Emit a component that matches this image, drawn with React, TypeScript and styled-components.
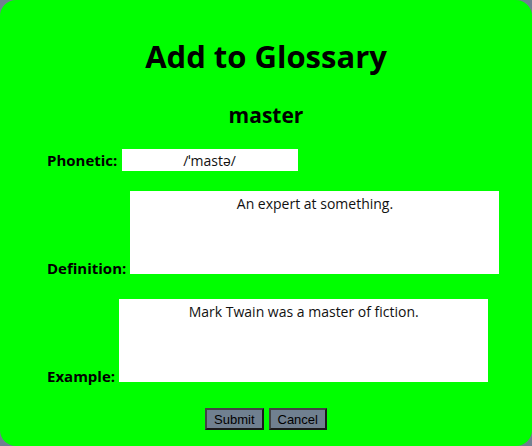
import React from 'react';
import styled, { createGlobalStyle } from 'styled-components';

const GlobalStyle = createGlobalStyle`
  html, body {
    margin: 0;
    padding: 0;
    background: #708090;
    overflow: hidden;
  }
`;

const Card = styled.div`
  box-sizing: border-box;
  width: 532px;
  height: 446px;
  background: #00ff00;
  border-radius: 16px;
  padding: 26px 0 0 47px;
  font-family: 'Open Sans', 'Noto Sans', sans-serif;
  color: #000;
`;

const Title = styled.h1`
  margin: 0 0 0 -47px;
  font-size: 31px;
  font-weight: 700;
  text-align: center;
  line-height: 60px;
`;

const Word = styled.h2`
  margin: 14px 0 0 -47px;
  font-size: 21px;
  font-weight: 700;
  text-align: center;
  line-height: 30px;
`;

const Row = styled.div<{ $top: number }>`
  margin-top: ${p => p.$top}px;
  line-height: 20px;
`;

const Label = styled.label`
  font-size: 15px;
  font-weight: 700;
`;

const TextInput = styled.input`
  box-sizing: border-box;
  width: 176px;
  height: 22px;
  border: none;
  outline: none;
  padding: 0;
  vertical-align: baseline;
  background: #fff;
  text-align: center;
  font-family: 'Open Sans', 'Noto Sans', sans-serif;
  font-size: 14px;
  color: #111;
`;

const TextArea = styled.textarea`
  box-sizing: border-box;
  width: 369px;
  height: 83px;
  border: none;
  outline: none;
  resize: none;
  padding: 3px 2px;
  margin: 0;
  vertical-align: baseline;
  background: #fff;
  text-align: center;
  font-family: 'Open Sans', 'Noto Sans', sans-serif;
  font-size: 14px;
  line-height: 20px;
  color: #111;
`;

const Buttons = styled.div`
  display: flex;
  justify-content: center;
  gap: 5px;
  margin: 22px 0 0 -47px;
`;

const Button = styled.button`
  box-sizing: border-box;
  height: 22px;
  padding: 0 7px;
  background: #708090;
  border: 2px solid #1a1a1a;
  border-top-color: #444;
  border-left-color: #444;
  font-family: 'Liberation Sans', Arial, sans-serif;
  font-size: 13px;
  color: #000;
  line-height: 15px;
`;

export default function App() {
  return (
    <>
      <GlobalStyle />
      <Card>
        <Title>Add to Glossary</Title>
        <Word>master</Word>
        <Row $top={19}>
          <Label>Phonetic:</Label> <TextInput defaultValue="/ˈmastə/" />
        </Row>
        <Row $top={20}>
          <Label>Definition:</Label> <TextArea defaultValue="An expert at something." />
        </Row>
        <Row $top={21}>
          <Label>Example:</Label> <TextArea defaultValue="Mark Twain was a master of fiction." />
        </Row>
        <Buttons>
          <Button>Submit</Button>
          <Button>Cancel</Button>
        </Buttons>
      </Card>
    </>
  );
}
